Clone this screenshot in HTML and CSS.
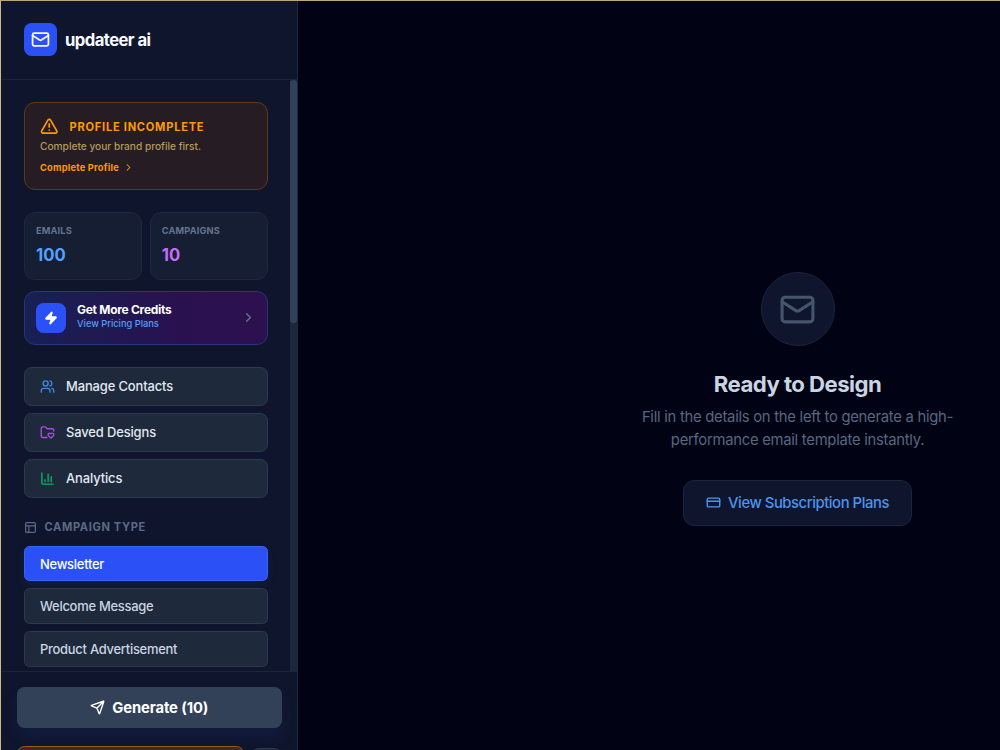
FILE: index.html
```html
<!DOCTYPE html>
<html lang="en">
<head>
<meta charset="utf-8">
<title>updateer ai</title>
<link rel="stylesheet" href="styles.css">
</head>
<body>
<div class="app">
  <aside class="sidebar">
    <header class="brand">
      <span class="brand-logo"><svg class="icon" width="19" height="19" viewBox="0 0 24 24"><rect x="2" y="4" width="20" height="16" rx="2"/><path d="m22 7-8.97 5.7a1.94 1.94 0 0 1-2.06 0L2 7"/></svg></span>
      <span class="brand-name">updateer ai</span>
    </header>
    <div class="scroll">
      <div class="content">
        <section class="notice">
          <div class="notice-title"><svg class="icon" width="18.5" height="18.5" viewBox="0 0 24 24"><path d="m21.73 18-8-14a2 2 0 0 0-3.48 0l-8 14A2 2 0 0 0 4 21h16a2 2 0 0 0 1.73-3"/><path d="M12 9v4M12 17h.01"/></svg><span>PROFILE INCOMPLETE</span></div>
          <p class="notice-text">Complete your brand profile first.</p>
          <a class="notice-link"><span>Complete Profile</span><svg class="icon" width="11" height="11" viewBox="0 0 24 24"><path d="m9 18 6-6-6-6"/></svg></a>
        </section>
        <section class="stats">
          <div class="stat"><span class="stat-label">EMAILS</span><span class="stat-value blue">100</span></div>
          <div class="stat"><span class="stat-label">CAMPAIGNS</span><span class="stat-value purple">10</span></div>
        </section>
        <a class="credits">
          <span class="credits-icon"><svg width="14" height="14" viewBox="0 0 24 24" fill="currentColor" stroke="currentColor" stroke-width="2" stroke-linejoin="round"><path d="M4 14a1 1 0 0 1-.78-1.63l9.9-10.2a.5.5 0 0 1 .86.46l-1.92 6.02A1 1 0 0 0 13 10h7a1 1 0 0 1 .78 1.63l-9.9 10.2a.5.5 0 0 1-.86-.46l1.92-6.02A1 1 0 0 0 11 14z"/></svg></span>
          <span class="credits-copy"><b>Get More Credits</b><small>View Pricing Plans</small></span>
          <svg class="icon chevron" width="15" height="15" viewBox="0 0 24 24"><path d="m9 18 6-6-6-6"/></svg>
        </a>
        <nav class="links">
          <a class="link"><svg class="icon c-blue" width="15" height="15" viewBox="0 0 24 24"><path d="M16 21v-2a4 4 0 0 0-4-4H6a4 4 0 0 0-4 4v2"/><circle cx="9" cy="7" r="4"/><path d="M22 21v-2a4 4 0 0 0-3-3.87M16 3.13a4 4 0 0 1 0 7.75"/></svg><span>Manage Contacts</span></a>
          <a class="link"><svg class="icon c-purple" width="15" height="15" viewBox="0 0 24 24"><path d="M11 20H4a2 2 0 0 1-2-2V5a2 2 0 0 1 2-2h3.9a2 2 0 0 1 1.69.9l.81 1.2a2 2 0 0 0 1.67.9H20a2 2 0 0 1 2 2v1.5"/><path d="M13.9 17.45c-1.2-1.2-1.14-2.8-.2-3.73a2.43 2.43 0 0 1 3.44 0l.36.34.34-.34a2.43 2.43 0 0 1 3.45-.01c.95.95 1 2.53-.2 3.74L17.5 21Z"/></svg><span>Saved Designs</span></a>
          <a class="link"><svg class="icon c-green" width="15" height="15" viewBox="0 0 24 24"><path d="M3 3v16a2 2 0 0 0 2 2h16M8 17v-3M13 17V5M18 17V9"/></svg><span>Analytics</span></a>
        </nav>
        <div class="label"><svg class="icon" width="13" height="13" viewBox="0 0 24 24"><rect x="3" y="3" width="18" height="18" rx="2"/><path d="M3 9h18M9 21V9"/></svg><span>CAMPAIGN TYPE</span></div>
        <div class="types">
          <div class="type active">Newsletter</div>
          <div class="type">Welcome Message</div>
          <div class="type">Product Advertisement</div>
        </div>
      </div>
      <div class="track"><div class="thumb"></div></div>
    </div>
    <footer class="footer">
      <div class="generate"><svg class="icon" width="15" height="15" viewBox="0 0 24 24"><path d="M14.54 21.69a.5.5 0 0 0 .93-.03l6.5-19a.5.5 0 0 0-.63-.63l-19 6.5a.5.5 0 0 0-.03.93l7.93 3.18a2 2 0 0 1 1.11 1.11zM21.85 2.15l-10.94 10.94"/></svg><span>Generate (10)</span></div>
      <div class="extras"><span class="extra-main"></span><span class="extra-side"></span></div>
    </footer>
  </aside>
  <main class="main">
    <div class="empty">
      <div class="orb"><svg class="icon" width="37" height="37" viewBox="0 0 24 24"><rect x="2" y="4" width="20" height="16" rx="2"/><path d="m22 7-8.97 5.7a1.94 1.94 0 0 1-2.06 0L2 7"/></svg></div>
      <h1>Ready to Design</h1>
      <p>Fill in the details on the left to generate a high-<br>performance email template instantly.</p>
      <a class="plans"><svg class="icon" width="15" height="15" viewBox="0 0 24 24"><rect x="2" y="5" width="20" height="14" rx="2"/><path d="M2 10h20"/></svg><span>View Subscription Plans</span></a>
    </div>
  </main>
</div>
</body>
</html>
```
FILE: styles.css
```css
* { box-sizing: border-box; }
body { margin: 0; font-family: Inter, "Liberation Sans", sans-serif; background: #020617; color: #e2e8f0; -webkit-font-smoothing: antialiased; }
.icon { fill: none; stroke: currentColor; stroke-width: 2.2; stroke-linecap: round; stroke-linejoin: round; }
svg { display: block; flex: none; }
.app { display: flex; width: 1000px; height: 750px; overflow: hidden; border-top: 1px solid #bda57e; border-left: 1px solid #d0b48a; background: #010314; }
.sidebar { width: 297px; flex: none; display: flex; flex-direction: column; background: #0f152c; border-right: 1px solid #1d283d; }
.brand { height: 79px; flex: none; display: flex; align-items: center; gap: 8px; padding: 0 0 1px 23px; border-bottom: 1px solid #1b253a; }
.brand-logo { width: 33px; height: 33px; border-radius: 7.5px; background: #2b50f5; color: #f5f8ff; display: flex; align-items: center; justify-content: center; }
.brand-name { font-size: 16.65px; font-weight: 700; letter-spacing: -0.56px; color: #f8fafc; }
.scroll { height: 591px; flex: none; display: flex; overflow: hidden; }
.content { width: 289px; flex: none; padding: 22px 22.5px 0 23px; }
.track { width: 7px; background: #1d273b; }
.thumb { height: 243px; border-radius: 4px; background: #324158; }
.notice { height: 88px; padding: 15px 15px; border: 1px solid #5f3b13; border-radius: 11px; background: #261c23; color: #fe9a00; }
.notice-title { display: flex; align-items: center; gap: 11px; height: 17px; font-size: 11.1px; font-weight: 700; letter-spacing: 0.75px; }
.notice-text { margin: 4px 0 0; font-size: 10.2px; line-height: 14px; font-weight: 500; color: #b39b5c; letter-spacing: -0.02px; }
.notice-link { display: flex; align-items: center; gap: 4px; margin-top: 8px; height: 13px; font-size: 9.25px; font-weight: 700; letter-spacing: 0.23px; }
.stats { display: grid; grid-template-columns: 1fr 1fr; gap: 8px; margin-top: 22px; }
.stat { height: 68px; padding: 11px 11px; border: 1px solid #1e293d; border-radius: 11px; background: #161e33; display: flex; flex-direction: column; }
.stat-label { font-size: 9.25px; line-height: 14px; font-weight: 700; letter-spacing: 0.14px; color: #62748e; }
.stat-value { margin-top: 4px; font-size: 16.65px; line-height: 26px; font-weight: 700; }
.blue { color: #51a2ff; }
.purple { color: #c76df8; }
.credits { height: 54px; margin-top: 11px; padding: 0 11px 1px; border: 1px solid #24357a; border-radius: 11px; background: linear-gradient(90deg, #172054, #29114f 65%, #2d104f); display: flex; align-items: center; }
.credits-icon { width: 30px; height: 30px; border-radius: 7.5px; background: #2b50f5; color: #fff; display: flex; align-items: center; justify-content: center; }
.credits-copy { flex: 1; margin: -2px 0 0 11px; display: flex; flex-direction: column; }
.credits-copy b { font-size: 12px; line-height: 15px; letter-spacing: -0.28px; color: #fff; }
.credits-copy small { font-size: 9.25px; line-height: 14px; font-weight: 500; color: #519ff8; }
.chevron { color: #62748e; }
.links { display: grid; gap: 7.2px; margin-top: 22px; }
.link { height: 39px; display: flex; align-items: center; gap: 11px; padding: 0 0 1px 15px; border: 1px solid #2c394e; border-radius: 7.5px; background: #1e293b; font-size: 12.95px; font-weight: 500; letter-spacing: -0.13px; }
.c-blue { color: #4188e6; }
.c-purple { color: #ac4be0; }
.c-green { color: #05b26a; }
.label { display: flex; align-items: center; gap: 7.5px; height: 15px; margin: 21.5px 0 11px; font-size: 11.1px; font-weight: 700; letter-spacing: 0.64px; color: #5a6a84; }
.types { display: grid; gap: 7px; }
.type { height: 35.6px; line-height: 34.5px; padding-left: 15px; border: 1px solid #2c394e; border-radius: 5.5px; background: #1e293b; font-size: 12.95px; font-weight: 500; letter-spacing: -0.26px; color: #cad5e2; }
.active { background: #2b50f5; border-color: #3167f5; color: #fff; box-shadow: 0 4px 9px rgba(28,57,142,.2); }
.footer { height: 78px; flex: none; padding: 15px 15px 0 15.5px; border-top: 1px solid #1b253a; background: #0f152c; }
.generate { height: 41px; display: flex; align-items: center; justify-content: center; gap: 7px; border-radius: 7.5px; background: #324158; box-shadow: 0 9px 14px rgba(28,57,142,.2); color: #fff; font-size: 14.8px; font-weight: 700; letter-spacing: -0.1px; }
.extras { display: flex; gap: 7px; margin-top: 18px; }
.extra-main { width: 227px; height: 37px; border: 1px solid #955b13; border-radius: 7.5px; background: #3a2929; }
.extra-side { width: 31px; height: 37px; margin-top: 2px; border: 1px solid #2c394e; border-radius: 7.5px; background: #1e293b; }
.main { flex: 1; }
.empty { width: 370px; margin: 271px 0 0 314.5px; display: flex; flex-direction: column; align-items: center; text-align: center; }
.orb { width: 74px; height: 74px; border: 1px solid #1b253a; border-radius: 50%; background: #0f152c; color: #45556c; display: flex; align-items: center; justify-content: center; }
.orb .icon { stroke-width: 2; }
.empty h1 { margin: 23px 0 7px; font-size: 22.2px; line-height: 30px; font-weight: 700; letter-spacing: -0.55px; color: #cad5e2; }
.empty p { margin: 0; padding-top: 0.4px; font-size: 14.8px; line-height: 22.4px; letter-spacing: -0.26px; color: #58677f; white-space: nowrap; }
.plans { width: 229px; height: 46px; margin-top: 28.7px; border: 1px solid #1b253a; border-radius: 11px; background: #0f152c; color: #4b96ec; display: flex; align-items: center; justify-content: center; gap: 7px; font-size: 14.8px; font-weight: 500; letter-spacing: -0.43px; }
```
